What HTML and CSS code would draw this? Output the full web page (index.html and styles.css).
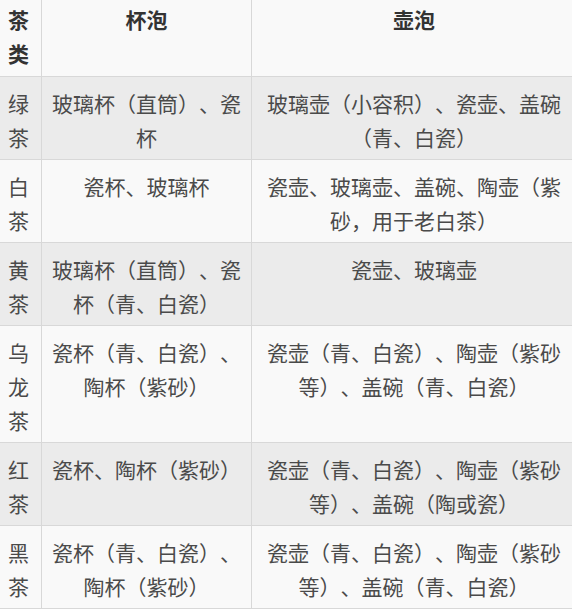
FILE: index.html
```html
<!DOCTYPE html>
<html lang="zh-CN">
<head>
<meta charset="utf-8">
<title>茶类与冲泡器具</title>
<link rel="stylesheet" href="styles.css">
</head>
<body>
<table class="tea-table">
  <colgroup>
    <col class="col-type">
    <col class="col-cup">
    <col class="col-pot">
  </colgroup>
  <thead>
    <tr class="row-head">
      <th>茶类</th>
      <th>杯泡</th>
      <th>壶泡</th>
    </tr>
  </thead>
  <tbody>
    <tr class="row-odd">
      <td>绿茶</td>
      <td>玻璃杯（直筒）、瓷杯</td>
      <td>玻璃壶（小容积）、瓷壶、盖碗（青、白瓷）</td>
    </tr>
    <tr class="row-even">
      <td>白茶</td>
      <td>瓷杯、玻璃杯</td>
      <td>瓷壶、玻璃壶、盖碗、陶壶（紫砂，用于老白茶）</td>
    </tr>
    <tr class="row-odd">
      <td>黄茶</td>
      <td>玻璃杯（直筒）、瓷杯（青、白瓷）</td>
      <td>瓷壶、玻璃壶</td>
    </tr>
    <tr class="row-even">
      <td>乌龙茶</td>
      <td>瓷杯（青、白瓷）、陶杯（紫砂）</td>
      <td>瓷壶（青、白瓷）、陶壶（紫砂等）、盖碗（青、白瓷）</td>
    </tr>
    <tr class="row-odd">
      <td>红茶</td>
      <td>瓷杯、陶杯（紫砂）</td>
      <td>瓷壶（青、白瓷）、陶壶（紫砂等）、盖碗（陶或瓷）</td>
    </tr>
    <tr class="row-even">
      <td>黑茶</td>
      <td>瓷杯（青、白瓷）、陶杯（紫砂）</td>
      <td>瓷壶（青、白瓷）、陶壶（紫砂等）、盖碗（青、白瓷）</td>
    </tr>
  </tbody>
</table>
</body>
</html>
```

FILE: styles.css
```css
html, body {
  margin: 0;
  padding: 0;
  background: #f9f9f9;
}

body {
  overflow: hidden;
  font-family: "Noto Sans CJK SC", "Noto Sans", sans-serif;
}

.tea-table {
  border-collapse: collapse;
  table-layout: fixed;
  width: 581px;
  margin: -8px 0 0 -5px;
  font-size: 21px;
  line-height: 34px;
  color: #4a4a4a;
  text-spacing-trim: space-all;
}

.col-type { width: 46px; }
.col-cup { width: 210px; }
.col-pot { width: 325px; }

.tea-table th,
.tea-table td {
  border: 1px solid #d8d8d8;
  padding: 9px 10px 5px;
  text-align: center;
  vertical-align: top;
  word-break: break-all;
}

.tea-table th {
  padding-bottom: 6px;
  font-weight: bold;
  color: #333;
}

.tea-table th:first-child,
.tea-table td:first-child {
  padding-left: 12px;
  padding-right: 12px;
}

.row-head { background: #f9f9f9; }
.row-even { background: #f9f9f9; }
.row-odd { background: #ebebeb; }
```
